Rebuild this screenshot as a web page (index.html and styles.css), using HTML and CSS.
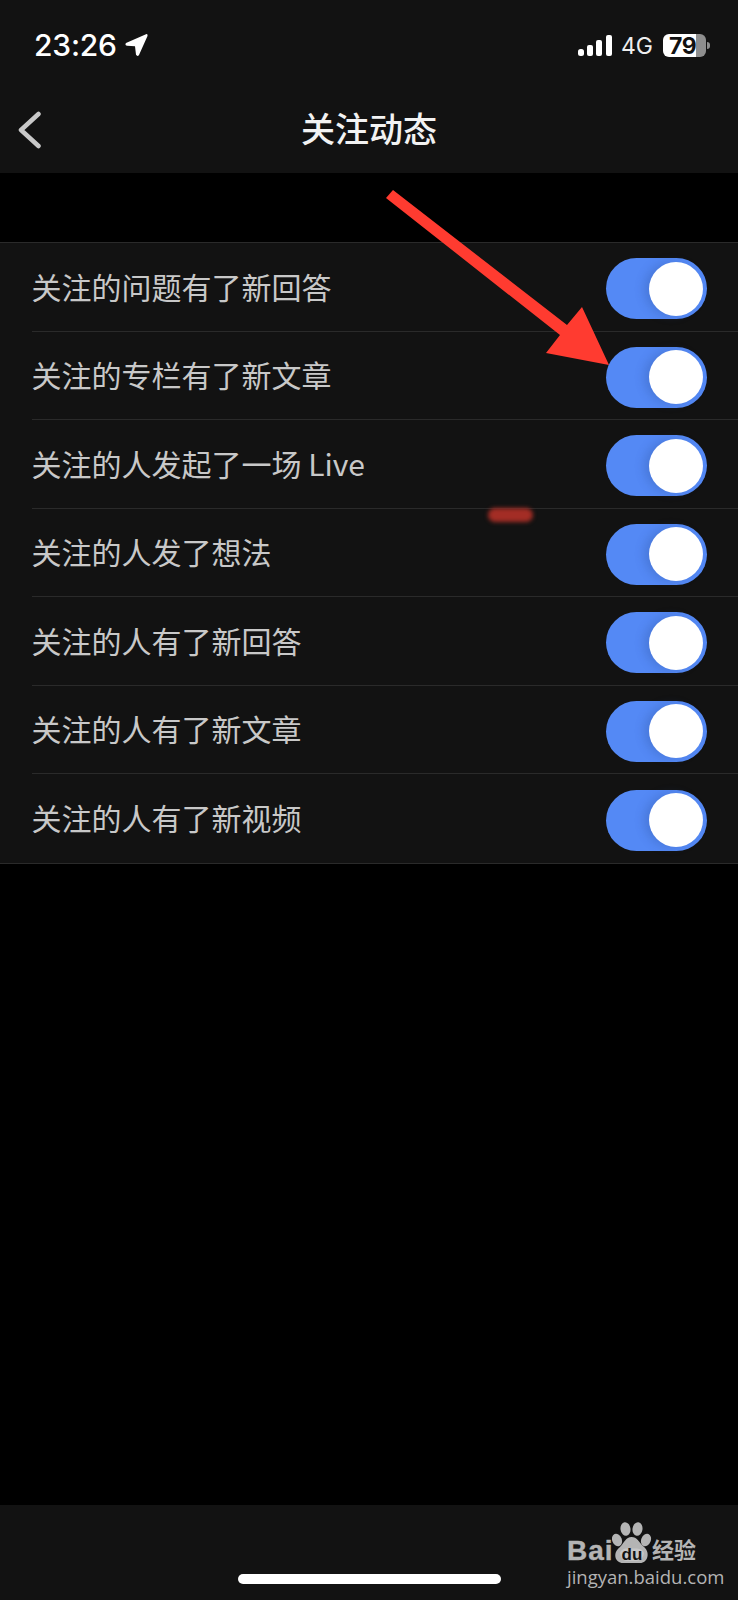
FILE: index.html

```html
<!DOCTYPE html>
<html lang="zh-CN">
<head>
    <meta charset="UTF-8">
    <meta name="viewport" content="width=device-width, initial-scale=1.0">
    <title>关注动态</title>
    <link rel="stylesheet" href="styles.css">
</head>
<body>
    <div class="phone">
        <header class="top">
            <div class="status-bar">
                <div class="status-left">
                    <span class="time">23:26</span>
                    <svg class="location" width="23" height="24" viewBox="0 0 23 24"><path d="M21 1.2 L1 10 Q-0.500 12.300 2 12.800 L10 13.200 L11 21.800 Q12.500 24 14 22 L22.500 3 Q22.800 0.600 21 1.200 Z" fill="#fff"/></svg>
                </div>
                <div class="status-right">
                    <svg class="signal" width="34" height="21" viewBox="0 0 34 21">
                        <rect x="0" y="14" width="6" height="7" rx="2.5" fill="#fff"/>
                        <rect x="9" y="10" width="6" height="11" rx="2" fill="#fff"/>
                        <rect x="18" y="5" width="6" height="16" rx="2" fill="#fff"/>
                        <rect x="28" y="0" width="6" height="21" rx="2" fill="#fff"/>
                    </svg>
                    <span class="network">4G</span>
                    <div class="battery">
                        <div class="battery-body">
                            <span class="battery-num">79</span>
                        </div>
                        <div class="battery-tip"></div>
                    </div>
                </div>
            </div>
            <nav class="nav-bar">
                <svg class="back" width="26" height="40" viewBox="0 0 26 40"><path d="M21.500 3 L4 19 L21.500 35" fill="none" stroke="#c9c9c9" stroke-width="4.500" stroke-linecap="round" stroke-linejoin="round"/></svg>
                <h1 class="nav-title">关注动态</h1>
            </nav>
        </header>

        <main class="content">
            <ul class="settings-list">
                <li class="row"><div class="row-inner"><span>关注的问题有了新回答</span><div class="toggle"><div class="knob"></div></div></div></li>
                <li class="row"><div class="row-inner"><span>关注的专栏有了新文章</span><div class="toggle"><div class="knob"></div></div></div></li>
                <li class="row"><div class="row-inner"><span>关注的人发起了一场 Live</span><div class="toggle"><div class="knob"></div></div></div></li>
                <li class="row"><div class="row-inner"><span>关注的人发了想法</span><div class="toggle"><div class="knob"></div></div></div></li>
                <li class="row"><div class="row-inner"><span>关注的人有了新回答</span><div class="toggle"><div class="knob"></div></div></div></li>
                <li class="row"><div class="row-inner"><span>关注的人有了新文章</span><div class="toggle"><div class="knob"></div></div></div></li>
                <li class="row"><div class="row-inner"><span>关注的人有了新视频</span><div class="toggle"><div class="knob"></div></div></div></li>
            </ul>
        </main>

        <footer class="bottom">
            <div class="watermark">
                <div class="wm-logo">
                    <span class="wm-bai">Bai</span>
                    <svg class="wm-paw" width="40" height="42" viewBox="0 0 40 42">
                        <ellipse cx="13.500" cy="7" rx="5" ry="6.800" transform="rotate(-8 13.500 7)" fill="#b4b4b4"/>
                        <ellipse cx="25.500" cy="7" rx="5" ry="6.800" transform="rotate(8 25.500 7)" fill="#b4b4b4"/>
                        <ellipse cx="5" cy="18" rx="4.800" ry="6.500" transform="rotate(-22 5 18)" fill="#b4b4b4"/>
                        <ellipse cx="34" cy="18" rx="4.800" ry="6.500" transform="rotate(22 34 18)" fill="#b4b4b4"/>
                        <path d="M19.500 15 C25 15 27 20 31 24 C39 30 36 41 28 41 L11 41 C3 41 0 31 8 25 C12 21 14 15 19.500 15 Z" fill="#b4b4b4"/>
                        <path d="M8 31 Q9 27 14 26.500 L25 26.500 Q31 27 32 31 Q31 38 25 39 L14 39 Q9 38 8 31 Z" fill="#c6c6c6"/>
                        <text x="20" y="38" text-anchor="middle" class="wm-du">du</text>
                    </svg>
                    <span class="wm-cn">经验</span>
                </div>
                <div class="wm-url">jingyan.baidu.com</div>
            </div>
            <div class="home-indicator"></div>
        </footer>

        <!-- red annotations drawn over the screenshot -->
        <svg class="arrow" width="738" height="400" viewBox="0 0 738 400"><polygon points="393,190 567,325 582,307 609,365 546,353 560,335 386,198" fill="#ff3b30"/></svg>
        <div class="smudge"></div>
    </div>
</body>
</html>
```

FILE: styles.css

```css
/* Page */
* {
    box-sizing: border-box;
}

body {
    margin: 0;
    background: #000;
    font-family: "Noto Sans CJK SC", "Noto Sans", sans-serif;
}

.phone {
    position: relative;
    width: 738px;
    height: 1600px;
    display: flex;
    flex-direction: column;
    overflow: hidden;
}

/* Status bar + nav */
.top {
    height: 173px;
    background: #121212;
}

.status-bar {
    height: 90px;
    padding: 33px 28px 0 34px;
    display: flex;
    justify-content: space-between;
}

.status-left {
    display: flex;
    align-items: flex-start;
    gap: 8px;
}

.time {
    font-family: Inter, "Liberation Sans", sans-serif;
    font-size: 30px;
    font-weight: 500;
    line-height: 24px;
    color: #fff;
    letter-spacing: -0.2px;
}

.status-right {
    display: flex;
    align-items: flex-start;
}

.signal {
    margin-top: 2px;
}

.network {
    width: 31px;
    font-family: Inter, "Liberation Sans", sans-serif;
    font-size: 23px;
    line-height: 24px;
    color: #eee;
    margin: 1px 11px 0 9px;
}

.battery {
    display: flex;
    align-items: center;
    height: 23px;
    margin-top: 1px;
}

.battery-body {
    width: 43px;
    height: 23px;
    border-radius: 6px;
    padding-left: 6px;
    background: linear-gradient(to right, #fff 33px, #8e8e8e 33px);
}

.battery-num {
    display: block;
    font-family: Inter, "Liberation Sans", sans-serif;
    font-size: 23px;
    font-weight: 700;
    line-height: 24px;
    color: #111;
    letter-spacing: -0.5px;
}

.battery-tip {
    width: 3px;
    height: 7px;
    margin-left: 1px;
    border-radius: 0 3px 3px 0;
    background: #8e8e8e;
}

.nav-bar {
    height: 83px;
    display: flex;
    align-items: center;
    justify-content: center;
    position: relative;
}

.back {
    position: absolute;
    left: 17px;
    top: 21px;
}

.nav-title {
    margin: 0;
    font-size: 34px;
    font-weight: 500;
    line-height: 1;
    color: #f2f2f2;
    position: relative;
    top: -4px;
}

/* Settings list */
.content {
    flex: 1;
    padding-top: 69px;
}

.settings-list {
    margin: 0;
    padding: 0;
    list-style: none;
    background: #121212;
    border-top: 1px solid #2a2a2a;
    border-bottom: 1px solid #2a2a2a;
}

.row {
    height: 88.5px;
    padding-left: 32px;
}

.row-inner {
    height: 100%;
    padding-right: 31px;
    display: flex;
    align-items: center;
    justify-content: space-between;
    border-bottom: 1px solid #2a2a2a;
    font-size: 30px;
    color: #c8c8c8;
}

.row:last-child .row-inner {
    border-bottom: none;
}

.row-inner span {
    position: relative;
    top: -1px;
    left: -0.5px;
}

.toggle {
    width: 101px;
    height: 61px;
    margin-top: 4px;
    border-radius: 31px;
    padding-right: 4px;
    background: #5489f5;
    display: flex;
    align-items: center;
    justify-content: flex-end;
}

.knob {
    width: 54px;
    height: 54px;
    border-radius: 50%;
    background: #fff;
    box-shadow: -5px 0 10px rgba(40, 70, 140, 0.25);
}

/* Bottom bar */
.bottom {
    position: relative;
    height: 95px;
    background: #121212;
    display: flex;
    justify-content: flex-end;
    padding: 17px 41px 0 0;
}

.watermark {
    width: 130px;
    color: #b4b4b4;
}

.wm-logo {
    display: flex;
    align-items: flex-end;
    height: 42px;
}

.wm-bai {
    width: 45px;
    font-family: "Liberation Sans", sans-serif;
    font-size: 28px;
    font-weight: 700;
    line-height: 26px;
    letter-spacing: 1px;
    margin-bottom: 0;
    -webkit-text-stroke: 0.4px #b4b4b4;
}

.wm-paw {
    flex: none;
}

.wm-cn {
    font-size: 22px;
    font-weight: 700;
    line-height: 26px;
    white-space: nowrap;
    margin-bottom: 3px;
}

.wm-du {
    font-family: "Liberation Sans", sans-serif;
    font-size: 17px;
    font-weight: 700;
    fill: #121212;
}

.wm-url {
    font-family: "Open Sans", sans-serif;
    font-size: 18.5px;
    line-height: 22px;
    margin-top: 2px;
    white-space: nowrap;
}

.home-indicator {
    position: absolute;
    left: 238px;
    top: 69px;
    width: 263px;
    height: 10px;
    border-radius: 5px;
    background: #fff;
}

/* Annotations */
.arrow {
    position: absolute;
    left: 0;
    top: 0;
}

.smudge {
    position: absolute;
    left: 488px;
    top: 508px;
    width: 45px;
    height: 14px;
    border-radius: 7px;
    background: #a32d25;
    filter: blur(2px);
}
```
